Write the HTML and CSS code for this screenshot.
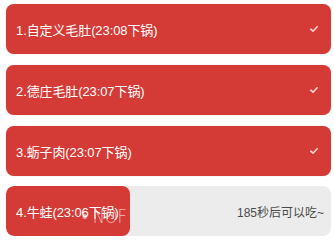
FILE: index.html
```html
<!DOCTYPE html>
<html lang="zh">
<head>
<meta charset="utf-8">
<link rel="stylesheet" href="styles.css">
</head>
<body>
<div class="list">
  <div class="card done">
    <span class="name">1.自定义毛肚(23:08下锅)</span>
    <svg class="check" viewBox="0 0 8 6" width="8" height="6"><polyline points="0.8,3.2 3,5.2 7.2,0.8" fill="none" stroke="#f6d3d0" stroke-width="1.6" stroke-linecap="round" stroke-linejoin="round"/></svg>
  </div>
  <div class="card done">
    <span class="name">2.德庄毛肚(23:07下锅)</span>
    <svg class="check" viewBox="0 0 8 6" width="8" height="6"><polyline points="0.8,3.2 3,5.2 7.2,0.8" fill="none" stroke="#f6d3d0" stroke-width="1.6" stroke-linecap="round" stroke-linejoin="round"/></svg>
  </div>
  <div class="card done">
    <span class="name">3.蛎子肉(23:07下锅)</span>
    <svg class="check" viewBox="0 0 8 6" width="8" height="6"><polyline points="0.8,3.2 3,5.2 7.2,0.8" fill="none" stroke="#f6d3d0" stroke-width="1.6" stroke-linecap="round" stroke-linejoin="round"/></svg>
  </div>
  <div class="card pending">
    <div class="fill" style="width:38%"></div>
    <span class="name">4.牛蛙(23:06下锅)</span>
    <span class="remain">185秒后可以吃~</span>
    <span class="mark">• NOF</span>
  </div>
</div>
</body>
</html>
```
FILE: styles.css
```css
html, body {
  margin: 0;
  padding: 0;
  background: #ffffff;
}
body {
  font-family: "Liberation Sans", "Noto Sans CJK SC", sans-serif;
}
.list {
  display: flex;
  flex-direction: column;
  gap: 11px;
  padding: 4px 3px 0 6px;
}
.card {
  position: relative;
  height: 50px;
  border-radius: 8px;
  display: flex;
  align-items: center;
  justify-content: space-between;
  padding: 0 12px 0 10px;
  box-sizing: border-box;
  overflow: hidden;
}
.card.done {
  background: #d43b37;
  box-shadow: 0 0 1px rgba(150, 40, 40, 0.35);
}
.card.pending {
  background: #ececec;
  margin-top: -1px;
}
.name {
  position: relative;
  color: #ffffff;
  font-size: 13px;
  letter-spacing: -0.1px;
}
.check {
  display: block;
  margin-right: 1px;
}
.fill {
  position: absolute;
  left: 0;
  top: 0;
  bottom: 0;
  background: #d43b37;
  border-radius: 8px;
}
.remain {
  position: relative;
  color: #4a4a4a;
  font-size: 12px;
  margin-right: -5px;
}
.mark {
  position: absolute;
  left: 76px;
  top: 19px;
  font-family: "DejaVu Sans", sans-serif;
  font-size: 19px;
  font-weight: 200;
  color: rgba(255, 255, 255, 0.62);
  white-space: nowrap;
  transform: scaleX(0.85);
  transform-origin: left center;
}
```
